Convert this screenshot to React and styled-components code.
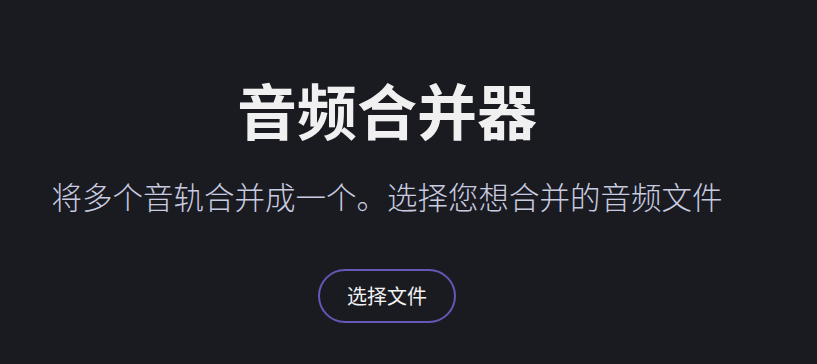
import styled, { createGlobalStyle } from 'styled-components'

const GlobalStyle = createGlobalStyle`
    html, body {
        margin: 0;
        padding: 0;
        background: #1a1b20;
    }
    body {
        font-family: "Noto Sans CJK SC", "Noto Sans", sans-serif;
        color: #f2f2f2;
    }
`

const App = () => {
    return (
        <Page>
            <GlobalStyle />
            <Main>
                <Title>音频合并器</Title>
                <Subtitle>将多个音轨合并成一个。选择您想合并的音频文件</Subtitle>
                <PickButton type="button">选择文件</PickButton>
            </Main>
        </Page>
    );
};

const Page = styled.div`
    min-height: 364px;
    display: flex;
    justify-content: center;
    padding-right: 43px;
`

const Main = styled.main`
    display: flex;
    flex-direction: column;
    align-items: center;
    padding-top: 70px;
`

const Title = styled.h1`
    margin: 0;
    font-size: 60px;
    font-weight: 700;
    line-height: 1.3;
    color: #f0f0f0;
`

const Subtitle = styled.p`
    margin: 26px 0 0;
    font-size: 30.5px;
    font-weight: 300;
    line-height: 1.5;
    color: #c9cce0;
`

const PickButton = styled.button`
    margin-top: 49px;
    width: 138px;
    height: 54px;
    border: 2px solid #6656b8;
    border-radius: 27px;
    background: transparent;
    color: #f2f2f2;
    font-family: "Noto Sans CJK SC", "Noto Sans", sans-serif;
    font-size: 20px;
    cursor: pointer;
`

export default App;
